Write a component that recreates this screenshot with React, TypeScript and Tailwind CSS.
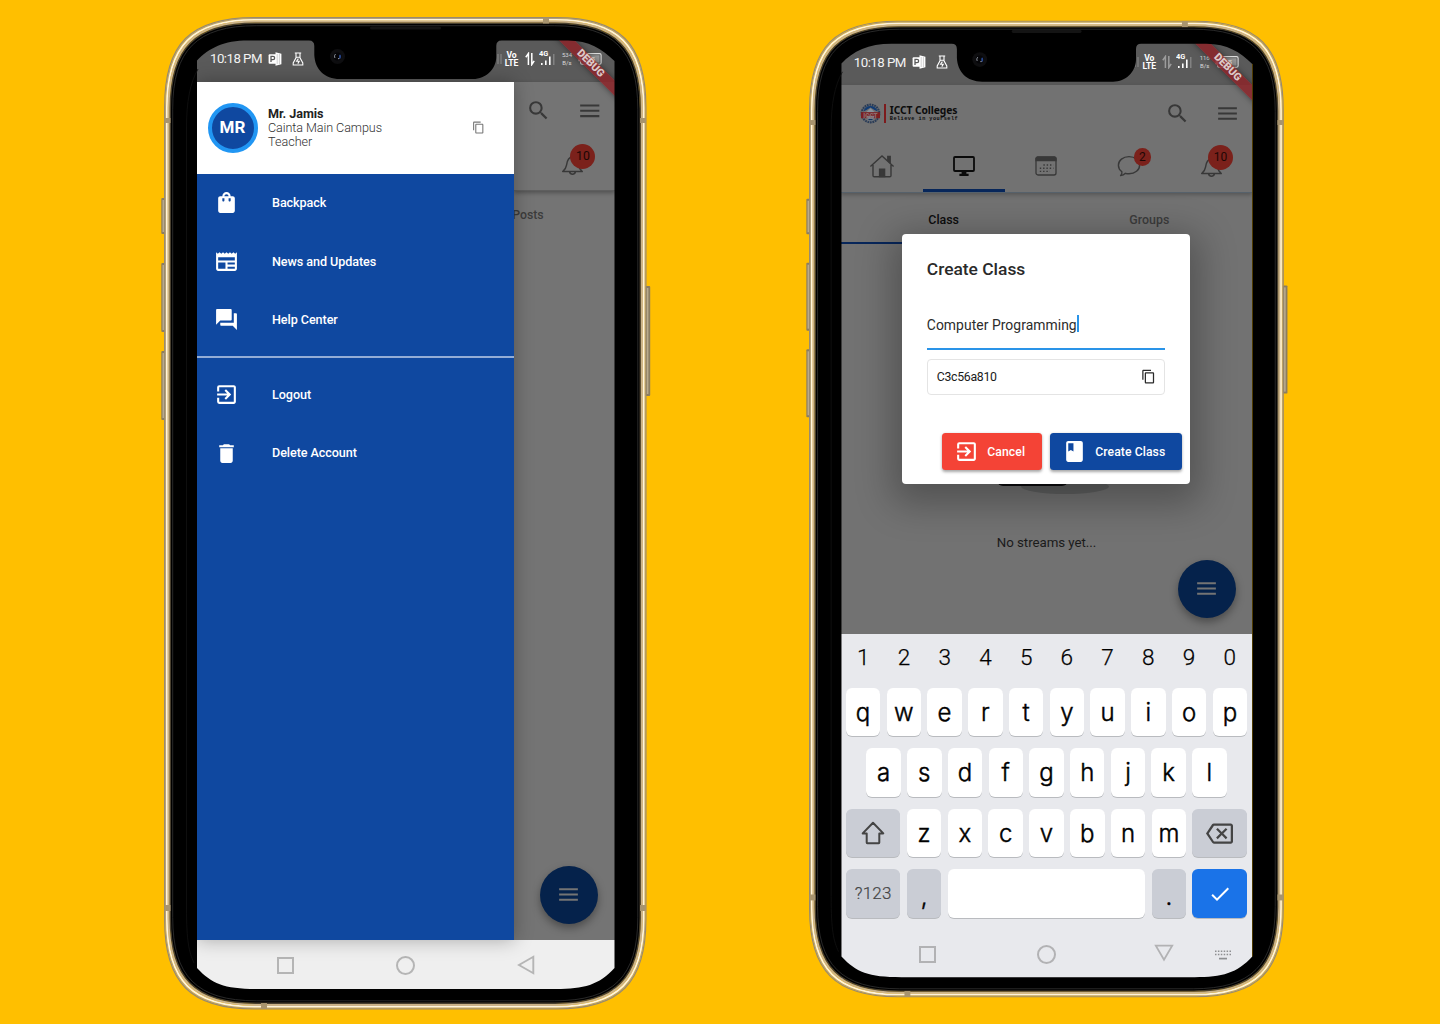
import React from "react";
import {
  MdBook,
  MdCheck,
  MdContentCopy,
  MdDelete,
  MdExitToApp,
  MdForum,
  MdMenu,
  MdNewspaper,
  MdOutlineBackspace,
  MdSearch,
  MdShoppingBag,
} from "react-icons/md";

const W = 482.5;
const H = 992.5;

/** Smooth-cornered rectangle inset from the phone's outline. */
function shell(i: number) {
  const r = 90 - i * 0.75;
  const c = r * 0.29;
  const a = i;
  const x2 = W - i;
  const y2 = H - i;
  return `M${a} ${a + r}C${a} ${a + c} ${a + c} ${a} ${a + r} ${a}H${x2 - r}C${x2 - c} ${a} ${x2} ${a + c} ${x2} ${a + r}V${y2 - r}C${x2} ${y2 - c} ${x2 - c} ${y2} ${x2 - r} ${y2}H${a + r}C${a + c} ${y2} ${a} ${y2 - c} ${a} ${y2 - r}Z`;
}

const HOLE =
  "M33 43.5C45 31 60 23.5 84 23.5H145Q150.3 23.5 150.3 29V38C151 52 160 62 176 62H309C322 62 332 52 332.3 40V29Q332.3 23.5 337.5 23.5H404C425 23.5 438 32 450.5 44V951C435 968 420 972 392 972H94C60 972 48 967 33 951Z";

const RINGS: [number, number, string][] = [
  [0.6, 1.2, "#998a6f"],
  [1.6, 1.1, "#b3a07a"],
  [2.9, 1.8, "#fff4dc"],
  [4.7, 2.2, "#cbb38a"],
  [6.3, 1.4, "#4a4130"],
];

function Frame() {
  return (
    <svg viewBox={`0 0 ${W} ${H}`} className="pointer-events-none absolute inset-0 h-full w-full overflow-visible" aria-hidden>
      {[
        [-2.7, 181, 36],
        [-2.7, 246, 69],
        [-2.7, 334, 69],
        [481.6, 269, 110],
      ].map(([x, y, h]) => (
        <g key={y}>
          <rect x={x} y={y} width="4.6" height={h} rx="1" fill="#8b7d61" />
          <rect x={x + 1.2} y={y + 2} width="1.6" height={h - 4} fill="#b9aa8c" />
        </g>
      ))}
      <path d={`${shell(6.5)}${HOLE}`} fill="#000" fillRule="evenodd" />
      {RINGS.map(([i, w, c]) => (
        <path key={i} d={shell(i)} fill="none" stroke={c} strokeWidth={w} />
      ))}
      <path d={shell(8.7)} fill="none" stroke="#3b3b3b" strokeWidth="0.7" />
      <path d="M22.5 890V110C22.5 85 26 66 34 52" fill="none" stroke="#121212" strokeWidth="0.8" />
      <path d="M22.5 890C22.5 925 25 935 30 946" fill="none" stroke="#121212" strokeWidth="0.8" />
      <g fill="#a8946e">
        <rect x="0.5" y="101" width="6" height="5" />
        <rect x="476" y="101" width="6" height="5" />
        <rect x="0.5" y="888" width="6" height="6" />
        <rect x="476" y="888" width="6" height="6" />
        <rect x="379" y="0.5" width="6" height="6" />
        <rect x="97" y="986" width="6" height="6" />
      </g>
      <rect x="206" y="9.5" width="71" height="3" rx="1.5" fill="#141414" />
      <circle cx="173.5" cy="39.5" r="7.5" fill="#0e0e10" />
      <circle cx="173.5" cy="39.5" r="4" fill="#050508" />
      <path d="M171.5 37a3.4 3.4 0 0 0-.6 4" stroke="#8a8f98" strokeWidth="1" fill="none" />
      <ellipse cx="176" cy="39.6" rx="1" ry="2.2" fill="#27468c" />
      <circle cx="174.8" cy="41.6" r="0.6" fill="#cfd6e4" />
    </svg>
  );
}

function StatusBar({ rate, dim }: { rate: string; dim?: boolean }) {
  return (
    <div className="flex h-[41.7px] shrink-0 items-center bg-[#5a5a5a] px-[13px] text-white">
      <span className="-mt-[3px] w-[52px] whitespace-nowrap text-[13.3px] tracking-[-0.55px] text-[#f2f2f2]">10:18 PM</span>
      <svg viewBox="0 0 14 14" className="-mt-[4px] ml-[6px] h-[14px] w-[14px]" aria-hidden>
        <path d="M7.5 .3 13.4 1.7v10.6L7.5 13.7z" fill="#fff" />
        <rect x="0.6" y="2.2" width="8" height="9.6" rx="1" fill="#fff" />
        <path d="M3 10V4.4h2a1.6 1.6 0 0 1 0 3.3H3" fill="none" stroke="#5a5a5a" strokeWidth="1.3" />
        <path d="M9.2 2v10M11.4 2v10" stroke="#a0a0a0" strokeWidth=".5" />
      </svg>
      <svg viewBox="0 0 12 14" className="-mt-[4px] ml-[10px] h-[14px] w-[12px]" fill="none" stroke="#fff" strokeWidth="1.1" aria-hidden>
        <path d="M2.8 1h6.4M4 1v4.8L1.2 11v2h9.6v-2L8 5.8V1M4 5.2h4" />
        <path d="M6.4 6.6 4.6 9.2h2.6l-1.4 2.4" />
      </svg>
      <span className="flex-1" />
      <svg viewBox="0 0 5 10" className="-mt-[4px] h-[10px] w-[5px]" aria-hidden>
        <path d="M1 0v10M4 0v10" stroke="#8c8c8c" strokeWidth="1" />
      </svg>
      <span className="-mt-[4px] ml-[3px] w-[14px] text-center text-[8.6px] font-bold leading-[8px] tracking-[-0.1px]">
        Vo
        <br />
        LTE
      </span>
      <svg viewBox="0 0 10 14" className={dim ? "-mt-[4px] ml-[6px] h-[14px] w-[10px] opacity-40" : "-mt-[4px] ml-[6px] h-[14px] w-[10px]"} fill="none" stroke="#fff" strokeWidth="1.5" aria-hidden>
        <path d="M3.4 13V1.5L.8 5.2M6.8 1v11.5l2.4-3.7" />
      </svg>
      <svg viewBox="0 0 18 18" className="-mt-[6px] ml-[4px] h-[18px] w-[18px]" aria-hidden>
        <text x="0" y="6.6" fontSize="7.4" fontWeight="700" fill="#fff" fontFamily="Roboto, sans-serif">
          4G
        </text>
        <path d="M2.8 14v2M6.8 11.5v4.5M10.8 7.5v8.5" stroke="#fff" strokeWidth="1.6" />
        <path d="M14.8 5v11" stroke="#8c8c8c" strokeWidth="1.2" />
      </svg>
      <span className="-mt-[4px] ml-[5px] w-[11px] whitespace-nowrap text-center text-[6px] leading-[8px] text-[#dadada]">
        {rate}
        <br />
        B/s
      </span>
      <svg viewBox="0 0 24 12" className="-mt-[4px] ml-[5px] h-[12px] w-[24px]" aria-hidden>
        <rect x="2.6" y=".6" width="20.5" height="10.6" rx="1.5" fill="none" stroke="#ddd" strokeWidth="1.1" />
        <rect x="0.6" y="3.6" width="2" height="4.6" fill="#ddd" />
        <rect x="5" y="2.2" width="16.5" height="7.4" fill="#969696" />
        <text x="8" y="8.8" fontSize="8" fontWeight="700" fill="#e8e8e8" fontFamily="Roboto, sans-serif">
          45
        </text>
      </svg>
    </div>
  );
}

function DebugRibbon() {
  return (
    <div className="absolute -right-[41px] top-[19.5px] flex h-[10.8px] w-[130px] rotate-45 items-center justify-center bg-[#8c2429]/85 shadow-[0_0_6px_rgba(0,0,0,0.45)]">
      <span className="-ml-[2px] text-[10.6px] font-black leading-none text-[#dcc9c9]">DEBUG</span>
    </div>
  );
}

function Bell({ className }: { className: string }) {
  return (
    <svg viewBox="0 0 24 24" className={className} fill="none" stroke="#383838" strokeWidth="1.4" strokeLinejoin="round" aria-hidden>
      <path d="M2.6 18.8c2-1.7 3.2-3.4 3.6-6 .6-4.6 1.8-8.1 5.8-8.1s5.2 3.5 5.8 8.1c.4 2.6 1.6 4.3 3.6 6zM9.2 19.2a2.9 2.9 0 0 0 5.6 0" />
    </svg>
  );
}

function Fab() {
  return (
    <div className="flex h-[58px] w-[58px] items-center justify-center rounded-full bg-[#05224b] shadow-[0_4px_8px_rgba(0,0,0,0.35)]">
      <MdMenu className="h-[25px] w-[25px] text-[#747474]" />
    </div>
  );
}

const MENU = [
  { label: "Backpack", Icon: MdShoppingBag },
  { label: "News and Updates", Icon: MdNewspaper },
  { label: "Help Center", Icon: MdForum },
];
const ACCOUNT = [
  { label: "Logout", Icon: MdExitToApp },
  { label: "Delete Account", Icon: MdDelete },
];

function MenuItem({ label, Icon }: { label: string; Icon: React.ComponentType<{ className?: string }> }) {
  return (
    <li className="flex h-[58.4px] items-center pl-[17px]">
      <Icon className="h-[25px] w-[25px]" />
      <span className="ml-[33px] pt-[1.5px] text-[12.6px] font-medium tracking-[-0.07px]">{label}</span>
    </li>
  );
}

function DrawerPhone() {
  return (
    <section className="relative ml-[164px] mt-[17.2px] h-[992.5px] w-[482.5px] shrink-0 pl-[33px] pt-[22.8px]">
      <div className="relative flex h-[950px] w-[417.5px] flex-col overflow-hidden bg-[#efefef]">
        <StatusBar rate="534" />
        <div className="flex h-[858px] bg-[#747474]">
          <aside className="z-10 flex w-[317.2px] shrink-0 flex-col bg-[#0f48a0] text-white shadow-[0_0_18px_rgba(0,0,0,0.3)]">
            <div className="flex h-[92px] shrink-0 items-center bg-white pl-[10.5px] pr-[29px]">
              <div className="flex h-[50px] w-[50px] items-center justify-center rounded-full border-[4.5px] border-[#2196f3] bg-[#0f48a0] text-[17px] font-bold">
                MR
              </div>
              <div className="ml-[10.5px] flex-1 pt-[1px] text-[12.6px] leading-[14.4px] text-[#222]">
                <p className="font-bold tracking-[-0.05px]">Mr. Jamis</p>
                <p className="font-light tracking-[-0.08px] text-[#333]">Cainta Main Campus</p>
                <p className="font-light text-[#333]">Teacher</p>
              </div>
              <MdContentCopy className="h-[13px] w-[13px] text-[#777]" />
            </div>
            <ul>
              {MENU.map((m) => (
                <MenuItem key={m.label} {...m} />
              ))}
            </ul>
            <div className="my-[7.3px] h-[2px] bg-[#93add6]" />
            <ul>
              {ACCOUNT.map((m) => (
                <MenuItem key={m.label} {...m} />
              ))}
            </ul>
          </aside>
          <div className="flex flex-1 flex-col">
            <div className="h-[109.5px] border-b border-[#5e5e5e] shadow-[0_2px_4px_rgba(0,0,0,0.3)]">
              <div className="flex h-[58px] items-center justify-between pl-[12.3px] pr-[12.5px] text-[#383838]">
                <MdSearch className="h-[25px] w-[25px]" />
                <MdMenu className="h-[25.5px] w-[25.5px]" />
              </div>
              <div className="relative ml-[45.8px] mt-[12px] h-[25px] w-[25px]">
                <Bell className="h-[25px] w-[25px]" />
                <span className="absolute left-[10.5px] top-[-8px] flex h-[25px] w-[25px] items-center justify-center rounded-full bg-[#7b211b] text-[12.3px] text-[#1d0705]">10</span>
              </div>
            </div>
            <p className="-ml-[2px] mt-[15px] text-[12.3px] font-medium leading-[18px] text-[#3c3c3c]">Posts</p>
            <div className="mb-[16px] mt-auto flex justify-end pr-[17px]">
              <Fab />
            </div>
          </div>
        </div>
        <nav className="flex h-[50px] shrink-0 items-center pl-[80px] pt-[1px]">
          <span className="h-[17px] w-[17px] border-2 border-[#b5b5b5]" />
          <span className="ml-[102px] h-[19px] w-[19px] rounded-full border-2 border-[#b5b5b5]" />
          <svg viewBox="0 0 18 20" className="ml-[101.5px] h-[20px] w-[18px]" fill="none" stroke="#b5b5b5" strokeWidth="1.9" aria-hidden>
            <path d="M16.3 1.8v16.4L2 10z" />
          </svg>
        </nav>
        <DebugRibbon />
      </div>
      <Frame />
    </section>
  );
}

function Logo() {
  return (
    <div className="flex items-center">
      <svg viewBox="0 0 21 21" className="h-[21px] w-[21px]" aria-hidden>
        <circle cx="10.5" cy="10.5" r="8.8" fill="none" stroke="#2b3d58" strokeWidth="2.2" strokeDasharray="1.8 .7" />
        <path d="M3.5 8.5a7.2 7.2 0 0 1 14 0l-3-1.6-4-2.5-4 2.5z" fill="#123c73" />
        <path d="m6.5 9 4-3.800 4 3.800z" fill="#8b939c" />
        <path d="M1 9.200h19v6H1z" fill="#7c1f22" />
        <path d="M6.500 12.800h8l-2 5.200h-4z" fill="#7e858d" />
        <text x="10.5" y="14.6" textAnchor="middle" fontSize="6.4" fontWeight="900" fill="#8d6c6e" fontFamily="Roboto, sans-serif">
          ICCT
        </text>
        <path d="M8.4 16.6h4.2" stroke="#17335c" strokeWidth="1.4" />
      </svg>
      <span className="ml-[3.500px] h-[19px] w-[2px] bg-[#7d1b1d]" />
      <div className="ml-[3.500px] font-['Noto_Sans',sans-serif] text-[#0c0c0c]">
        <p className="whitespace-nowrap text-[10.3px] font-bold leading-[12px] tracking-[-0.1px]">ICCT Colleges</p>
        <p className="whitespace-nowrap font-['Liberation_Mono',monospace] text-[5.2px] font-bold leading-[6px] tracking-[0.48px]">Believe in yourself</p>
      </div>
    </div>
  );
}

function Tabs() {
  return (
    <div className="grid h-[51.500px] grid-cols-5 text-[#383838]">
      <span className="flex items-center justify-center">
        <svg viewBox="0 0 26 24" className="-mt-px h-[24px] w-[26px]" fill="none" stroke="#383838" strokeWidth="1.4" aria-hidden>
          <path d="M1.4 12.6 13 2l11.6 10.6M4 11v10.6q0 1.2 1.2 1.2h15.6q1.2 0 1.2-1.2V11" />
          <path d="M18.8 6.5V2.4h2.400v6.400z" fill="#383838" />
          <path d="M10.6 22.600v-7.400h5v7.400z" fill="#383838" />
        </svg>
      </span>
      <span className="relative flex items-center justify-center">
        <svg viewBox="0 0 24 22" className="-mt-px h-[22px] w-[24px]" aria-hidden>
          <rect x="2" y="2" width="20" height="14" rx="1" fill="none" stroke="#0a0a0a" strokeWidth="1.8" />
          <path d="M9.6 16.5h4.8v2.2h2.2v2.2H7.4v-2.2h2.2z" fill="#0a0a0a" />
        </svg>
        <span className="absolute inset-x-0 bottom-0 h-[3px] bg-[#07265a]" />
      </span>
      <span className="flex items-center justify-center">
        <svg viewBox="0 0 24 22" className="-mt-px h-[22px] w-[24px]" aria-hidden>
          <rect x="2" y="2" width="20" height="18" rx="2" fill="none" stroke="#383838" strokeWidth="1.3" />
          <path d="M1.4 6.2V3.6q0-2.2 2.2-2.2h16.8q2.2 0 2.2 2.2v2.6z" fill="#383838" />
          <path d="M9.4 10h10M5.8 13.2h13.6M5.8 16.4h10" stroke="#383838" strokeWidth="1.4" strokeDasharray="1.4 1.9" />
        </svg>
      </span>
      <span className="relative flex items-center justify-center">
        <svg viewBox="0 0 24 24" className="-mt-px h-[24px] w-[24px]" fill="none" stroke="#383838" strokeWidth="1.4" strokeLinejoin="round" aria-hidden>
          <path d="M12 2.6c6 0 10.6 3.8 10.6 8.6S18 19.8 12 19.8c-1.4 0-2.4-.1-3.6-.5C7 20.8 6 21.4 3.6 21.6c1.1-1.2 1.5-2.3 1.3-3.8C2.6 16 1.4 13.8 1.4 11.2 1.4 6.4 6 2.6 12 2.6z" />
        </svg>
        <span className="absolute left-[46px] top-[7.5px] flex h-[17.5px] w-[17.5px] items-center justify-center rounded-full bg-[#7b211b] text-[12px] text-[#1d0705]">2</span>
      </span>
      <span className="relative flex items-center justify-center">
        <Bell className="h-[25px] w-[25px]" />
        <span className="absolute left-[38px] top-[4px] flex h-[25px] w-[25px] items-center justify-center rounded-full bg-[#7b211b] text-[12px] text-[#1d0705]">10</span>
      </span>
    </div>
  );
}

function CreateClassDialog() {
  return (
    <div className="absolute left-[61.5px] top-[190.5px] flex h-[250.6px] w-[287.5px] flex-col rounded-[4px] bg-white px-[24.5px] shadow-[0_10px_36px_10px_rgba(0,0,0,0.28)]">
      <h2 className="mt-[25px] text-[17.4px] font-medium leading-[20px] text-[#2a2a2a]">Create Class</h2>
      <div className="mt-[30px] flex h-[41px] items-start border-b-2 border-[#2a94e8] pt-[7px]">
        <span className="whitespace-nowrap text-[13.9px] leading-[18px] tracking-[0.05px] text-[#2c2c2c]">Computer Programming</span>
        <span className="-mt-px h-[17px] w-[2px] bg-[#2a94e8]" />
      </div>
      <div className="mt-[9px] flex h-[36px] items-center justify-between rounded-[4px] border border-[#e4e4e4] pl-[9px] pr-[8px]">
        <span className="pt-[1px] text-[12.3px] tracking-[-0.3px] text-[#1a1a1a]">C3c56a810</span>
        <MdContentCopy className="h-[15px] w-[15px] text-[#2a2a2a]" />
      </div>
      <div className="-mr-[16.5px] mt-[38.5px] flex justify-end gap-[8px] text-[12.2px] font-medium tracking-[0.08px] text-white">
        <button className="flex h-[37px] w-[100px] items-center rounded-[3.5px] bg-[#f44336] pl-[12px] shadow-[0_1.5px_3px_rgba(0,0,0,0.35)]">
          <MdExitToApp className="h-[25px] w-[25px]" />
          <span className="ml-[8.5px]">Cancel</span>
        </button>
        <button className="flex h-[37px] w-[132px] items-center rounded-[3.5px] bg-[#0f48a0] pl-[12.5px] shadow-[0_1.5px_3px_rgba(0,0,0,0.35)]">
          <MdBook className="h-[25px] w-[25px]" />
          <span className="ml-[8px] whitespace-nowrap">Create Class</span>
        </button>
      </div>
    </div>
  );
}

const keyBase = "flex h-[48.5px] items-center justify-center rounded-[6px] shadow-[0_1px_0_#b9bbbf]";

function Key({ c }: { c: string }) {
  return <span className={`${keyBase} w-[34.5px] bg-white pt-[1px]`}>{c}</span>;
}

function Keyboard() {
  return (
    <div className="flex flex-1 flex-col bg-[#e8e9ed] px-[5px] font-['Inter',sans-serif] text-[24px] font-light text-black [-webkit-text-stroke:0.45px_currentColor]">
      <div className="-mx-[3px] grid h-[47px] grid-cols-10 items-center text-center font-['Roboto',sans-serif] text-[22.5px] [-webkit-text-stroke:0.25px_currentColor]">
        {"1234567890".split("").map((d) => (
          <span key={d}>{d}</span>
        ))}
      </div>
      <div className="mt-[7px] flex justify-between">
        {"qwertyuiop".split("").map((c) => (
          <Key key={c} c={c} />
        ))}
      </div>
      <div className="mt-[12px] flex justify-between px-[20.5px]">
        {"asdfghjkl".split("").map((c) => (
          <Key key={c} c={c} />
        ))}
      </div>
      <div className="mt-[12px] flex justify-between">
        <span className={`${keyBase} w-[54.7px] bg-[#cacdd5]`}>
          <svg viewBox="0 0 24 24" className="h-[24px] w-[24px]" fill="none" stroke="#444" strokeWidth="2" strokeLinejoin="round" aria-hidden>
            <path d="M12 1.8 22.3 12.4h-4v9.2q0 .6-.6.6H6.3q-.6 0-.6-.6v-9.2h-4z" />
          </svg>
        </span>
        {"zxcvbnm".split("").map((c) => (
          <Key key={c} c={c} />
        ))}
        <span className={`${keyBase} w-[54.7px] bg-[#cacdd5]`}>
          <MdOutlineBackspace className="h-[27px] w-[27px] text-[#444]" />
        </span>
      </div>
      <div className="mt-[12px] flex justify-between">
        <span className={`${keyBase} w-[54.7px] bg-[#cacdd5] pt-[1px] font-['Roboto',sans-serif] text-[17px] tracking-[0.2px] text-[#444] [-webkit-text-stroke:0.2px_currentColor]`}>?123</span>
        <span className={`${keyBase} w-[34.5px] bg-[#cacdd5] pt-[6px]`}>,</span>
        <span className={`${keyBase} w-[197.5px] bg-white`} />
        <span className={`${keyBase} w-[34.5px] bg-[#cacdd5] pt-[6px]`}>.</span>
        <span className={`${keyBase} w-[54.7px] bg-[#1a73e8] text-white`}>
          <MdCheck className="h-[24px] w-[24px]" />
        </span>
      </div>
      <nav className="mt-[24px] flex h-[26px] items-center pl-[73.5px]">
        <span className="h-[17px] w-[17px] border-2 border-[#b2b2b4]" />
        <span className="ml-[100.5px] h-[19px] w-[19px] rounded-full border-2 border-[#b2b2b4]" />
        <svg viewBox="0 0 20 18" className="-mt-[4px] ml-[98.5px] h-[18px] w-[20px]" fill="none" stroke="#b2b2b4" strokeWidth="1.8" aria-hidden>
          <path d="M1.8 1.6h16.4L10 15.8z" />
        </svg>
        <svg viewBox="0 0 16 10" className="ml-[41px] h-[10px] w-[16px]" stroke="#8e8f92" strokeWidth="1.5" aria-hidden>
          <path d="M0 1.2h16M0 4.6h16" strokeDasharray="1.5 1.4" />
          <path d="M4 8.6h8" strokeWidth="1.7" />
        </svg>
      </nav>
    </div>
  );
}

function ClassPhone() {
  return (
    <section className="relative ml-[162px] mt-[20.2px] h-[978px] w-[474.8px] shrink-0 pl-[32.3px] pt-[23px]">
      <div className="relative flex h-[936px] w-[411.4px] flex-col overflow-hidden bg-[#e8e9ed]">
        <StatusBar rate="116" dim />
        <div className="relative flex h-[549.1px] shrink-0 flex-col bg-[#727272]">
          <header className="shrink-0 border-b border-[#56616b] shadow-[0_2px_4px_rgba(0,0,0,0.25)]">
            <div className="flex h-[56px] items-center pl-[19px] pr-[12.5px] pt-[1px] text-[#383838]">
              <Logo />
              <MdSearch className="ml-auto h-[25px] w-[25px]" />
              <MdMenu className="ml-[24.5px] h-[25px] w-[25px]" />
            </div>
            <Tabs />
          </header>
          <div className="grid h-[50.5px] shrink-0 grid-cols-2 text-center text-[12.4px] font-medium leading-[54px] text-[#3c3c3c]">
            <span className="h-[50.5px] border-b-2 border-[#07265a] text-[#0c0c0c]">Class</span>
            <span>Groups</span>
          </div>
          <div className="relative mt-[235px] flex h-[15px] justify-center">
            <span className="absolute left-[180px] top-0 h-[15px] w-[88px] rounded-[50%] bg-[#5f6060]" />
            <span className="absolute left-[156px] top-0 h-[7px] w-[71px] rounded-b-[6px] bg-[#0d0d0f]" />
          </div>
          <p className="mt-[40.5px] text-center text-[13.3px] leading-[18px] tracking-[-0.05px] text-[#1b1b1b]">No streams yet...</p>
          <div className="mb-[16px] mt-auto flex justify-end pr-[16.4px]">
            <Fab />
          </div>
        </div>
        <Keyboard />
        <CreateClassDialog />
        <DebugRibbon />
      </div>
      <Frame />
    </section>
  );
}

export default function App() {
  return (
    <main className="flex h-[1024px] w-[1440px] items-start overflow-hidden bg-[#ffbf00] font-['Roboto',sans-serif]">
      <DrawerPhone />
      <ClassPhone />
    </main>
  );
}
